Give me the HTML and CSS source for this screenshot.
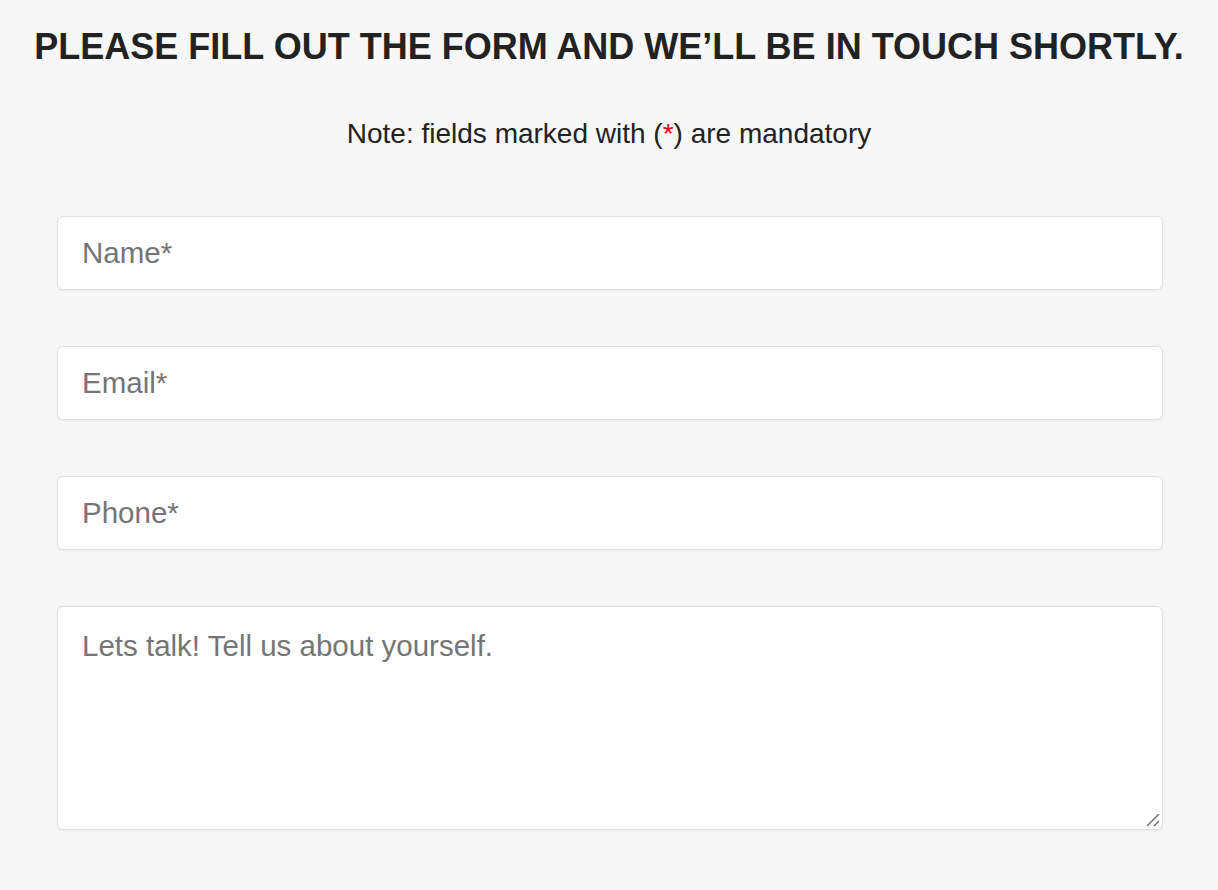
FILE: index.html
```html
<!DOCTYPE html>
<html lang="en">
<head>
  <meta charset="UTF-8">
  <title>Contact</title>
  <link rel="stylesheet" href="styles.css">
</head>
<body>
  <div class="contact">
    <h1>Please fill out the form and we’ll be in touch shortly.</h1>
    <p class="note">Note: fields marked with (<span class="req">*</span>) are mandatory</p>

    <form class="form">
      <input type="text" placeholder="Name*">
      <input type="email" placeholder="Email*">
      <input type="tel" placeholder="Phone*">
      <textarea placeholder="Lets talk! Tell us about yourself."></textarea>
    </form>
  </div>
</body>
</html>
```

FILE: styles.css
```css
* {
  box-sizing: border-box;
}
html, body {
  margin: 0;
  height: 100%;
  background: #f7f7f7;
  font-family: "Liberation Sans", Arial, sans-serif;
  color: #222;
}
.contact {
  padding-top: 26px;
}
h1 {
  margin: 0;
  font-size: 36px;
  line-height: 42px;
  font-weight: 700;
  text-transform: uppercase;
  text-align: center;
  white-space: nowrap;
}
.note {
  margin: 49px 0 0;
  font-size: 28px;
  line-height: 34px;
  text-align: center;
}
.req {
  color: #e3000f;
}
.form {
  margin: 65px 55px 0 57px;
  display: flex;
  flex-direction: column;
  gap: 56px;
}
input, textarea {
  display: block;
  width: 100%;
  font-family: inherit;
  font-size: 29.5px;
  color: #222;
  background: #fff;
  border: 1px solid #e0e0e0;
  border-radius: 6px;
  box-shadow: 0 1px 3px rgba(0, 0, 0, 0.06);
  outline: none;
}
input {
  height: 74px;
  padding: 0 24px;
}
textarea {
  height: 224px;
  padding: 22px 24px;
  line-height: 34px;
  resize: both;
}
/* mac-style grip in the corner */
textarea::-webkit-resizer {
  background: url("data:image/svg+xml,%3Csvg xmlns='http://www.w3.org/2000/svg' width='16' height='16'%3E%3Cpath d='M2 14L14 2M9 14L14 9' stroke='%23666' stroke-width='1.3'/%3E%3C/svg%3E") no-repeat right 1px bottom 1px;
}
input::placeholder, textarea::placeholder {
  color: #757575;
}
```
